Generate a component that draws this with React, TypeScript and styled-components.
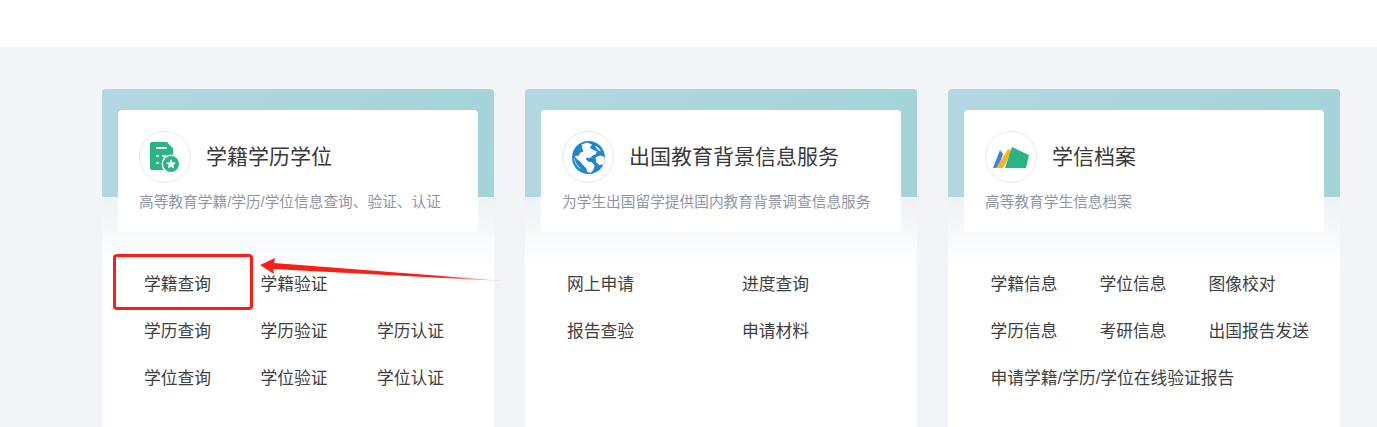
import React from "react";
import styled, { createGlobalStyle } from "styled-components";

const Global = createGlobalStyle`
  html, body { margin: 0; padding: 0; background: #fff; }
  body { font-family: "Liberation Sans", "Noto Sans CJK SC", sans-serif; }
  * { box-sizing: border-box; }
`;

const Page = styled.div`
  position: relative;
  width: 1377px;
  height: 427px;
  overflow: hidden;
  background: #fff;
`;
const Band = styled.main`
  margin-top: 47px;
  height: 380px;
  background: #f2f4f7;
  padding: 42px 37px 0 102px;
  display: flex;
  gap: 31px;
  align-items: flex-start;
`;
const Card = styled.section`
  width: 392px;
  height: 400px;
  flex: none;
  border-radius: 4px 4px 0 0;
  padding-top: 21px;
  background:
    linear-gradient(100deg, #b3d7e2 0%, #a3d4d8 100%) top / 100% 108px no-repeat,
    linear-gradient(180deg, #eef3f6 108px, #fff 180px);
`;
const Head = styled.header`
  width: 360px;
  height: 122px;
  margin: 0 16px;
  background: #fff;
  border-radius: 4px;
  padding: 21px 21px 0;
`;
const TitleRow = styled.div`
  display: flex;
  align-items: center;
  gap: 15px;
  height: 52px;
`;
const IconRing = styled.div`
  width: 52px;
  height: 52px;
  flex: none;
  border: 1px solid #e8e8e8;
  border-radius: 50%;
  display: flex;
  align-items: center;
  justify-content: center;
`;
const Title = styled.h2`
  margin: 0;
  font-size: 21px;
  line-height: 28px;
  font-weight: 400;
  color: #3a3a3a;
  white-space: nowrap;
`;
const Sub = styled.p`
  margin: 9px 0 0;
  font-size: 14.7px;
  line-height: 20px;
  color: #8f96a3;
  white-space: nowrap;
`;
const Links = styled.div<{ $step: number; $left: number }>`
  display: grid;
  grid-template-columns: repeat(auto-fill, ${p => p.$step}px);
  grid-auto-rows: 47px;
  padding: 29px 0 0 ${p => p.$left}px;
`;
const LinkItem = styled.a<{ $wide?: boolean }>`
  font-size: 16.75px;
  line-height: 47px;
  color: #3f3f3f;
  white-space: nowrap;
  ${p => (p.$wide ? "grid-column: 1 / -1;" : "")}
`;
const Spacer = styled.span``;
const Highlight = styled.div`
  position: absolute;
  left: 113px;
  top: 254px;
  width: 140px;
  height: 56px;
  border: 3px solid #fa1f16;
  border-radius: 4px;
`;
const Arrow = styled.svg`
  position: absolute;
  left: 255px;
  top: 252px;
  width: 250px;
  height: 34px;
`;

const DocIcon = () => (
  <svg width="30" height="30" viewBox="0 0 30 30">
    <path d="M2 0h15l6 6.500V28H2a2 2 0 0 1-2-2V2a2 2 0 0 1 2-2z" fill="#2bb483" />
    <rect x="6" y="5" width="11" height="2" rx="1" fill="#fff" />
    <rect x="6" y="13" width="3" height="2" rx="1" fill="#fff" />
    <rect x="12" y="13" width="4" height="2" rx="1" fill="#fff" />
    <rect x="6" y="20" width="3" height="2" rx="1" fill="#fff" />
    <circle cx="21" cy="22" r="9.500" fill="#fff" />
    <circle cx="21" cy="22" r="8" fill="#2bb483" />
    <path d="M21 17l1.500 3.300 3.500.4-2.600 2.300.7 3.500-3.100-1.800-3.100 1.800.7-3.500-2.600-2.300 3.500-.4z" fill="#fff" />
  </svg>
);

const GlobeIcon = () => (
  <svg width="33" height="33" viewBox="0 0 96 96">
    <circle cx="48" cy="48" r="48" fill="#1f87cf" />
    <path d="M28 10L44 4l14 6-6 10 10 6 10 4-2 8-10 4-8 8-8-2-4 4 8 8 10 2 8 10-4 12-8 8-10-2-2-10-8-8-10-12-12-10-4-6 12-2 4-8 10-4-4-6z" fill="#fff" />
    <path d="M68 48l14-6 12 4 1 10-4 12-12 2-8-8z" fill="#fff" />
    <path d="M66 14l10 4 8 12-6-2-6-6z" fill="#fff" />
    <path d="M6 50c2 12 8 22 18 30" stroke="#9acdee" strokeWidth="3" fill="none" />
  </svg>
);

const FilesIcon = () => (
  <svg width="36" height="21" viewBox="0 0 36 21">
    <path d="M0 21L7 3l3 4-5 14z" fill="#3f7fe8" />
    <path d="M3 21L15 2l4 2-9 17z" fill="#f9b61c" />
    <path d="M12 21L19 0l17 8-3 13z" fill="#2bb483" />
  </svg>
);

const cards = [
  {
    title: "学籍学历学位",
    sub: "高等教育学籍/学历/学位信息查询、验证、认证",
    icon: <DocIcon />,
    step: 116.5,
    left: 42,
    links: ["学籍查询", "学籍验证", "", "学历查询", "学历验证", "学历认证", "学位查询", "学位验证", "学位认证"],
  },
  {
    title: "出国教育背景信息服务",
    sub: "为学生出国留学提供国内教育背景调查信息服务",
    icon: <GlobeIcon />,
    step: 175,
    left: 42,
    links: ["网上申请", "进度查询", "报告查验", "申请材料"],
  },
  {
    title: "学信档案",
    sub: "高等教育学生信息档案",
    icon: <FilesIcon />,
    step: 109,
    left: 42.5,
    links: ["学籍信息", "学位信息", "图像校对", "学历信息", "考研信息", "出国报告发送", "*申请学籍/学历/学位在线验证报告"],
  },
];

export default function App() {
  return (
    <Page>
      <Global />
      <Band>
        {cards.map(c => (
          <Card key={c.title}>
            <Head>
              <TitleRow>
                <IconRing>{c.icon}</IconRing>
                <Title>{c.title}</Title>
              </TitleRow>
              <Sub>{c.sub}</Sub>
            </Head>
            <Links $step={c.step} $left={c.left}>
              {c.links.map((l, i) =>
                l === "" ? (
                  <Spacer key={i} />
                ) : l.startsWith("*") ? (
                  <LinkItem key={i} $wide>{l.slice(1)}</LinkItem>
                ) : (
                  <LinkItem key={i}>{l}</LinkItem>
                )
              )}
            </Links>
          </Card>
        ))}
      </Band>
      <Highlight />
      <Arrow viewBox="0 0 250 34">
        <defs>
          <linearGradient id="tail" x1="0" x2="1" y1="0" y2="0">
            <stop offset="0" stopColor="#fa1f16" />
            <stop offset="0.75" stopColor="#fa1f16" />
            <stop offset="1" stopColor="#fa1f16" stopOpacity="0.1" />
          </linearGradient>
        </defs>
        <path d="M5 13L20 6l-1 5 226 17.500v.5L18 17l1 5z" fill="url(#tail)" />
      </Arrow>
    </Page>
  );
}
